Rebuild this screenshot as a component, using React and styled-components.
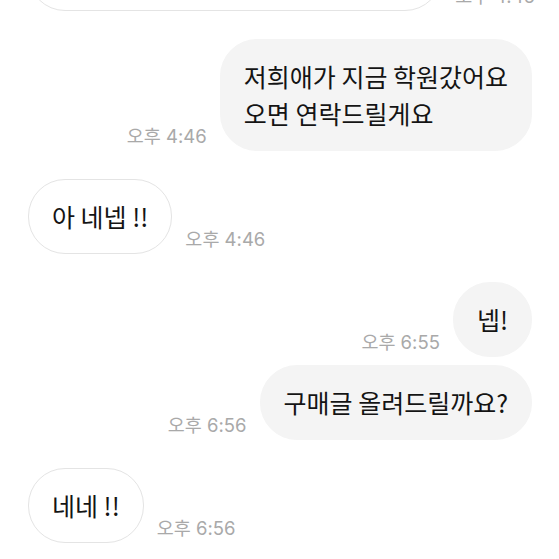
import React from "react";
import styled, { createGlobalStyle } from "styled-components";

const GlobalStyle = createGlobalStyle`
  html, body {
    margin: 0;
    padding: 0;
    background: #ffffff;
    overflow: hidden;
  }
  body {
    font-family: Inter, "Noto Sans CJK KR", "Noto Sans", sans-serif;
    -webkit-font-smoothing: antialiased;
  }
`;

const Screen = styled.div`
  width: 559px;
  height: 559px;
  overflow: hidden;
  background: #ffffff;
`;

const Thread = styled.div`
  display: flex;
  flex-direction: column;
  padding: 0 27px 0 28px;
  margin-top: -64px;
`;

const Row = styled.div`
  display: flex;
  align-items: flex-end;
  justify-content: ${(p) => (p.$mine ? "flex-end" : "flex-start")};
  gap: 13px;
  margin-top: ${(p) => (p.$grouped ? "8px" : "28px")};
  &:first-child {
    margin-top: 0;
  }
`;

const Bubble = styled.div`
  box-sizing: border-box;
  padding: 18px 23px;
  border-radius: 37px;
  font-family: "Noto Sans CJK KR", sans-serif;
  font-size: 25px;
  line-height: 37px;
  color: #141414;
  white-space: pre;
  background: ${(p) => (p.$mine ? "#f4f4f4" : "#ffffff")};
  border: 1px solid ${(p) => (p.$mine ? "#f4f4f4" : "#e4e4e4")};
`;

const Time = styled.span`
  font-family: Inter, "Noto Sans CJK KR", sans-serif;
  font-size: 18.5px;
  font-weight: 400;
  line-height: 18px;
  color: #a9a9a9;
  margin-bottom: 6px;
  white-space: nowrap;
`;

const messages = [
  { mine: false, text: "네네 그럼 연락 기다리고 있을게요 !!", time: "오후 4:45" },
  { mine: true, text: "저희애가 지금 학원갔어요\n오면 연락드릴게요", time: "오후 4:46" },
  { mine: false, text: "아 네넵 !!", time: "오후 4:46" },
  { mine: true, text: "넵!", time: "오후 6:55" },
  { mine: true, text: "구매글 올려드릴까요?", time: "오후 6:56" },
  { mine: false, text: "네네 !!", time: "오후 6:56" },
];

export default function App() {
  return (
    <Screen>
      <GlobalStyle />
      <Thread>
        {messages.map((m, i) => {
          const grouped = i > 0 && messages[i - 1].mine === m.mine;
          return (
            <Row key={i} $mine={m.mine} $grouped={grouped}>
              {m.mine && <Time>{m.time}</Time>}
              <Bubble $mine={m.mine}>{m.text}</Bubble>
              {!m.mine && <Time>{m.time}</Time>}
            </Row>
          );
        })}
      </Thread>
    </Screen>
  );
}
